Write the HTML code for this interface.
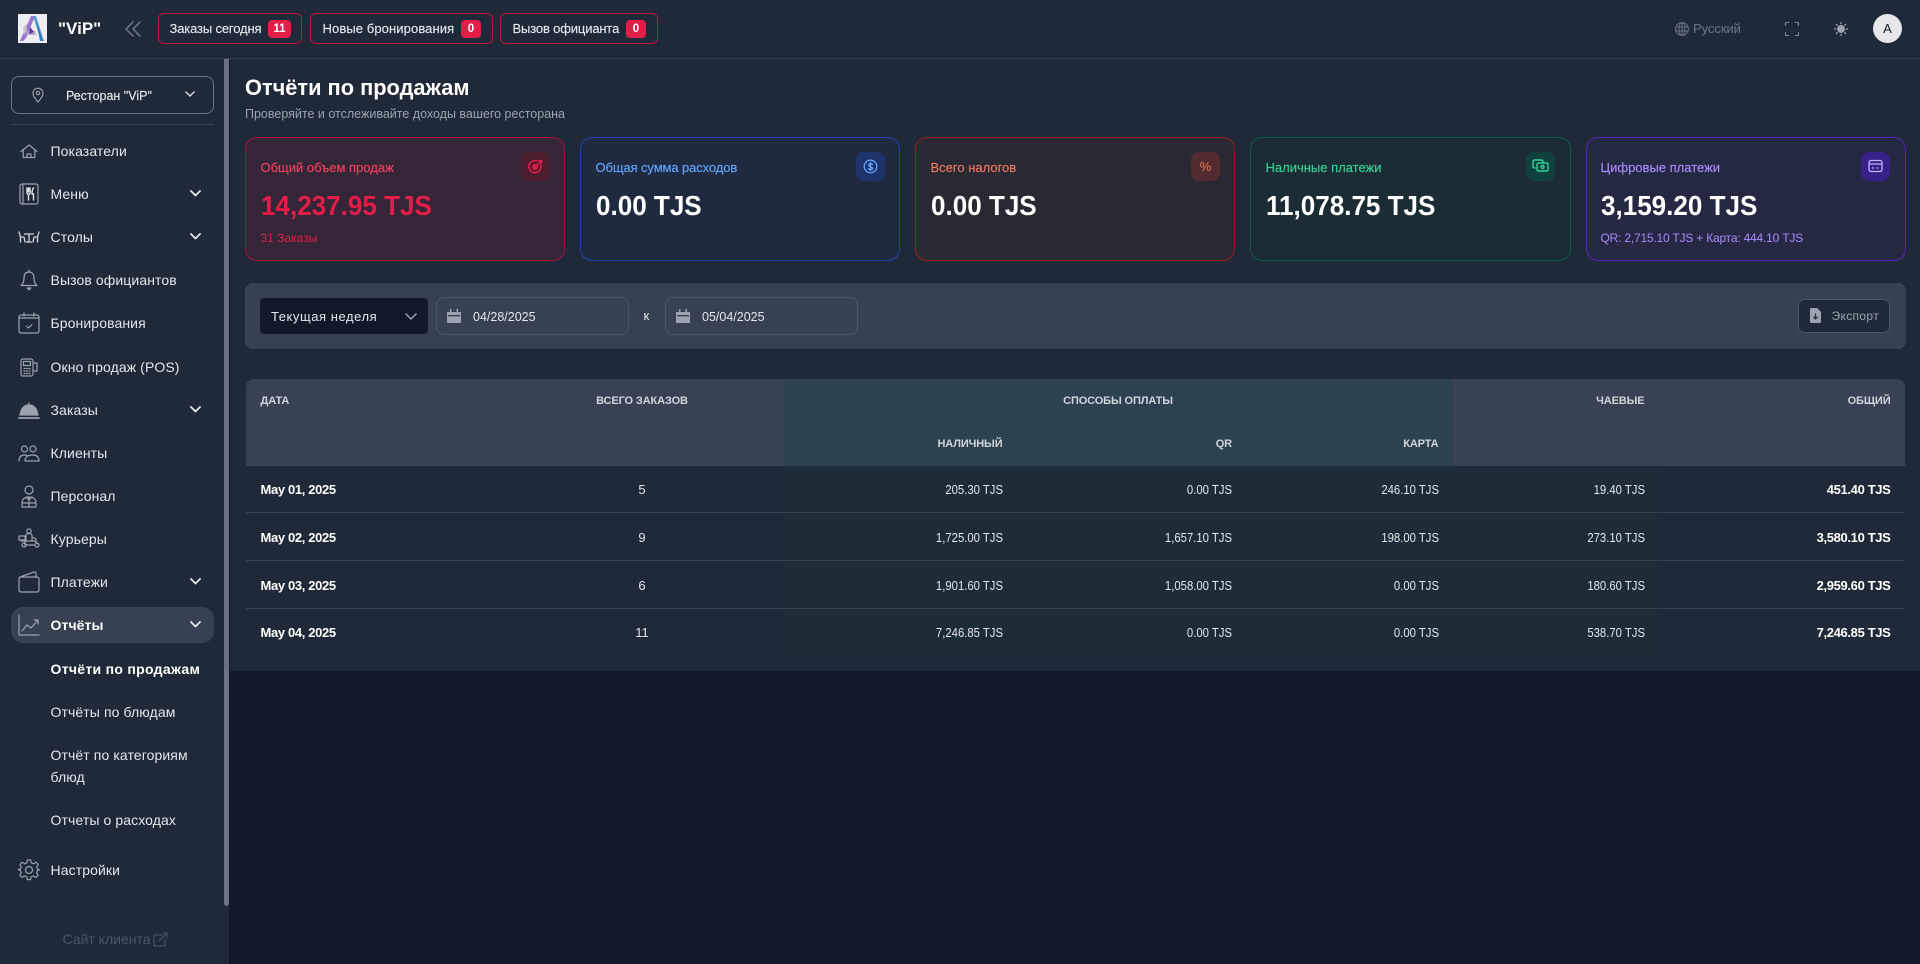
<!DOCTYPE html>
<html lang="ru"><head><meta charset="utf-8"><title>Отчёти по продажам</title>
<style>
*{box-sizing:border-box;margin:0;padding:0}
html,body{width:1920px;height:964px;overflow:hidden;background:#111827;font-family:"Liberation Sans","Noto Sans CJK SC",sans-serif;color:#e5e7eb}
.a{position:absolute}
.t{position:absolute;white-space:nowrap;line-height:20px;height:20px}
.r{text-align:right}
.c{text-align:center}
svg{position:absolute;fill:none;stroke:#9ca3af;stroke-width:1.2;stroke-linecap:round;stroke-linejoin:round}
#hdr{left:0;top:0;width:1920px;height:59px;background:#1f2937;border-bottom:1px solid #374151}
.btn{position:absolute;top:13px;height:31px;border:1px solid #be123c;border-radius:6px}
.bd{position:absolute;top:20px;height:18px;background:#e11d48;border-radius:4px;color:#fff;font-size:11.5px;font-weight:bold;line-height:18px;text-align:center}
.bt{font-size:13px;color:#e5e7eb;top:19px;-webkit-text-stroke:.15px #e5e7eb}
#side{left:0;top:59px;width:230px;height:905px;background:#1f2937;border-right:1px solid #111827}
.n{font-size:14px;left:50.5px;color:#e5e7eb;letter-spacing:.1px}
.card{position:absolute;top:137px;width:320.4px;height:124px;border:1px solid;border-radius:12px}
.ib{position:absolute;top:152px;width:29px;height:29px;border-radius:8px}
.lb{font-size:13px;top:158px;-webkit-text-stroke:.15px currentColor}
.val{font-size:28px;font-weight:bold;top:195.5px;color:#fff;transform:scaleX(.93);transform-origin:left center}
.h{font-size:11px;font-weight:bold;color:#d1d5db;top:391px;letter-spacing:-.12px}
.h2{top:434px}
.d{font-size:13px;color:#e5e7eb}
.d.r:not(.b){transform:scaleX(.87);transform-origin:right center}
.b{font-size:13px;font-weight:bold;color:#fff;letter-spacing:-.35px}
.line{position:absolute;left:246px;width:1659px;height:1px;background:#374151}
</style></head><body>

<header id="hdr" class="a"></header>
<!-- logo -->
<svg style="left:18px;top:14px;stroke:none" width="29" height="29" viewBox="0 0 29 29"><rect width="29" height="29" fill="#eeedf1"/><path d="M13 2h4L8 24l-3 3H2z" fill="#9a72cf"/><path d="M15 2h3l8 25h-3z" fill="#5b9bd0"/><path d="M18 6l7 21h-3z" fill="#2f7ab8"/><path d="M9 17h8l1 4H8z" fill="#b4a4cf"/><path d="M12 13l4 5-5 2z" fill="#5a3690"/><path d="M5 14l3-4 1 6-3 5z" fill="#c9c5cf"/></svg>
<div class="t" style="left:58px;top:19px;font-size:17px;font-weight:bold;color:#fff">"ViP"</div>
<svg style="left:124px;top:21px;stroke:#6b7280;stroke-width:1.6" width="18" height="16" viewBox="0 0 18 16"><path d="M9 1 2 8l7 7M16 1 9 8l7 7"/></svg>

<div class="btn" style="left:158px;width:144px"></div>
<div class="t bt" style="left:169.5px;letter-spacing:-.15px">Заказы сегодня</div>
<div class="bd" style="left:268px;width:23px">11</div>
<div class="btn" style="left:310px;width:183px"></div>
<div class="t bt" style="left:322.5px;letter-spacing:.1px">Новые бронирования</div>
<div class="bd" style="left:461px;width:20px">0</div>
<div class="btn" style="left:500px;width:158px"></div>
<div class="t bt" style="left:512.5px;letter-spacing:-.15px">Вызов официанта</div>
<div class="bd" style="left:626px;width:20px">0</div>

<svg style="left:1675px;top:22px;stroke:#6b7280;stroke-width:1" width="14" height="14" viewBox="0 0 14 14"><circle cx="7" cy="7" r="6.4"/><ellipse cx="7" cy="7" rx="3" ry="6.4"/><path d="M.8 5h12.4M.8 9h12.4M7 .6v12.8"/></svg>
<div class="t" style="left:1693px;top:19px;font-size:13px;color:#6b7280;-webkit-text-stroke:.1px #6b7280;letter-spacing:-.05px">Русский</div>
<svg style="left:1785px;top:22px;stroke:#7d8796;stroke-width:1.1;stroke-linecap:butt" width="14" height="14" viewBox="0 0 14 14"><path d="M.5 4V.5H4M10 .5h3.5V4M13.5 10v3.500H10M4 13.500H.5V10"/></svg>
<svg style="left:1834px;top:22px;stroke:#9ca3af;stroke-width:1.3" width="14" height="14" viewBox="0 0 14 14"><circle cx="7" cy="7" r="3.300" fill="#9ca3af"/><path d="M7 .5v1.200M7 12.300v1.200M.5 7h1.200M12.300 7h1.200M2.400 2.400l.9.9M10.700 10.700l.9.9M2.400 11.600l.9-.9M10.700 3.300l.9-.9"/></svg>
<div class="a" style="left:1873px;top:14px;width:29px;height:29px;border-radius:50%;background:#e5e7eb;color:#111827;font-size:13px;line-height:29px;text-align:center">A</div>

<aside id="side" class="a"></aside>
<div class="a" style="left:224px;top:59px;width:5px;height:847px;background:#6b7280;border-radius:0 0 3px 3px"></div>

<div class="a" style="left:11px;top:76px;width:203px;height:38px;border:1px solid #6b7280;border-radius:8px"></div>
<svg style="left:31px;top:87px;stroke:#9ca3af;stroke-width:1.100" width="14" height="16" viewBox="0 0 14 16"><path d="M7 15C4 11.500 2 9 2 6.200a5 5 0 0 1 10 0C12 9 10 11.500 7 15z"/><circle cx="7" cy="6" r="1.700"/></svg>
<div class="t" style="left:66px;top:85.500px;font-size:12.500px;color:#e5e7eb;-webkit-text-stroke:.15px #e5e7eb">Ресторан "ViP"</div>
<svg style="left:185px;top:91px;stroke:#d1d5db;stroke-width:1.500" width="10" height="7" viewBox="0 0 10 7"><path d="M1 1l4 4 4-4"/></svg>
<div class="a" style="left:11px;top:124px;width:203px;height:1px;background:#374151"></div>

<div class="a" style="left:11px;top:607px;width:203px;height:36px;background:#374151;border-radius:12px"></div>

<div class="t n" style="top:140.500px">Показатели</div>
<div class="t n" style="top:184px">Меню</div>
<div class="t n" style="top:227px">Столы</div>
<div class="t n" style="top:270px">Вызов официантов</div>
<div class="t n" style="top:313px">Бронирования</div>
<div class="t n" style="top:356.500px">Окно продаж (POS)</div>
<div class="t n" style="top:400px">Заказы</div>
<div class="t n" style="top:443px">Клиенты</div>
<div class="t n" style="top:486px">Персонал</div>
<div class="t n" style="top:529px">Курьеры</div>
<div class="t n" style="top:572px">Платежи</div>
<div class="t n" style="top:615px;font-weight:bold;color:#fff">Отчёты</div>
<div class="t n" style="top:659px;font-weight:bold;color:#fff;letter-spacing:.3px">Отчёти по продажам</div>
<div class="t n" style="top:702px">Отчёты по блюдам</div>
<div class="t n" style="top:745px">Отчёт по категориям</div>
<div class="t n" style="top:767px">блюд</div>
<div class="t n" style="top:810px">Отчеты о расходах</div>
<div class="t n" style="top:860px">Настройки</div>
<div class="t" style="left:62.500px;top:929px;font-size:14px;color:#4b5563">Сайт клиента</div>
<svg style="left:153px;top:932px;stroke:#4b5563;stroke-width:1.100" width="15" height="15" viewBox="0 0 15 15"><path d="M9 3H1v11h11V7M6 9l8-8M9.500 1H14v4.500"/></svg>

<!-- chevrons -->
<svg style="left:190px;top:190px;stroke:#e5e7eb;stroke-width:1.800" width="11" height="7" viewBox="0 0 11 7"><path d="M1 1l4.500 4.500L10 1"/></svg>
<svg style="left:190px;top:233px;stroke:#e5e7eb;stroke-width:1.800" width="11" height="7" viewBox="0 0 11 7"><path d="M1 1l4.500 4.500L10 1"/></svg>
<svg style="left:190px;top:406px;stroke:#e5e7eb;stroke-width:1.800" width="11" height="7" viewBox="0 0 11 7"><path d="M1 1l4.500 4.500L10 1"/></svg>
<svg style="left:190px;top:578px;stroke:#e5e7eb;stroke-width:1.800" width="11" height="7" viewBox="0 0 11 7"><path d="M1 1l4.500 4.500L10 1"/></svg>
<svg style="left:190px;top:621px;stroke:#e5e7eb;stroke-width:1.800" width="11" height="7" viewBox="0 0 11 7"><path d="M1 1l4.500 4.500L10 1"/></svg>

<!-- nav icons -->
<svg style="left:20px;top:144px" width="18" height="15" viewBox="0 0 18 15"><path d="M1 7.500 9 1l8 6.500M3.200 6v7.500h11.600V6M7 13.500v-3.500h4v3.500"/></svg>
<svg style="left:19px;top:183px" width="20" height="22" viewBox="0 0 20 22"><rect x="1" y="1" width="18" height="20" rx="2"/><path d="M4 1v20"/><path d="M8 5v5c0 1 1 1.500 1.500 1.500V17M9.500 5v4M11 5v5c0 1-1 1.500-1.500 1.500M14.500 5c-1.500 1-1.500 4-1.500 6h1.500v6" stroke="#e5e7eb" stroke-width="1.400"/></svg>
<svg style="left:18px;top:231px;stroke:#d1d5db;stroke-width:1.300" width="22" height="12" viewBox="0 0 22 12"><path d="M1 1l1.500 5V11M2.500 6H6l1 5M21 1l-1.500 5V11M19.500 6H16l-1 5M6.500 3h9M11 3v8M8.500 11h5"/></svg>
<svg style="left:20px;top:269px" width="18" height="22" viewBox="0 0 18 22"><path d="M9 1v2M9 3c-3.500 0-5 2.500-5 6 0 4-1 6-3 7.500h16c-2-1.500-3-3.500-3-7.500 0-3.500-1.500-6-5-6zM7 19h4l-2 2z"/></svg>
<svg style="left:18px;top:312px" width="22" height="22" viewBox="0 0 22 22"><rect x="1" y="3" width="20" height="18" rx="2"/><path d="M1 6h20M6 1v3M16 1v3M8.500 14l2 2 3.500-3.500"/></svg>
<svg style="left:20px;top:358px" width="18" height="19" viewBox="0 0 18 19"><rect x="1" y="1" width="12" height="17" rx="2"/><rect x="3.500" y="3.500" width="7" height="4"/><path d="M13 5h4v8h-4M4 10.500h1M6.500 10.500h1M9 10.500h1M4 13h1M6.500 13h1M9 13h1M4 15.500h1M6.500 15.500h1M9 15.500h1"/></svg>
<svg style="left:18px;top:402px" width="22" height="17" viewBox="0 0 22 17"><path d="M11 1v2M2 13C3 7 6 3 11 3s8 4 9 10z" fill="#9ca3af"/><path d="M1 16h20" stroke-width="1.800"/></svg>
<svg style="left:18px;top:445px" width="22" height="17" viewBox="0 0 22 17"><circle cx="6.500" cy="4" r="3"/><circle cx="15" cy="4" r="3"/><path d="M1 16c0-4 2-6 5.500-6 1 0 2 .2 2.500.6M7 16c0-4 3-6 7.500-6S21 12 21 16z"/></svg>
<svg style="left:21px;top:485px" width="16" height="23" viewBox="0 0 16 23"><circle cx="8" cy="5" r="4"/><path d="M1 22v-4c0-4 3-6 7-6s7 2 7 6v4zM8 12v10M1 18h14M5 12l3 3 3-3"/></svg>
<svg style="left:18px;top:528px" width="22" height="20" viewBox="0 0 22 20"><circle cx="11" cy="3" r="2.200"/><path d="M8 8c0-2 1-2.500 3-2.500s3 .5 3 2.500v5H8zM1 8h6v4H1zM3 13h14l3 3M7 14v3h9M14 9l4 2v3"/><circle cx="6" cy="17" r="2"/><circle cx="19" cy="17" r="2"/></svg>
<svg style="left:18px;top:571px" width="22" height="22" viewBox="0 0 22 22"><rect x="1" y="6" width="20" height="15" rx="2"/><path d="M2 6 16 1c1.500-.3 2 .5 2 2v3"/></svg>
<svg style="left:18px;top:614px" width="22" height="22" viewBox="0 0 22 22"><path d="M1 1v20h20"/><path d="M4 17l5-6 4 3 7-8M16 6h4v4"/></svg>
<svg style="left:18px;top:859px" width="22" height="22" viewBox="0 0 22 22"><circle cx="11" cy="11" r="3.500"/><path d="M9.300 1h3.400l.6 3 2.400 1 2.600-1.700 2.400 2.400L18.900 8.300l1 2.400 2 .6v-.3.300l-.1 0v0l-2 .6-1 2.400 1.700 2.600-2.400 2.400-2.600-1.700-2.400 1-.6 3H9.300l-.6-3-2.400-1-2.600 1.700-2.400-2.400 1.700-2.600-1-2.400-2-.6v-.4l2-.6 1-2.400L1.400 5.700l2.400-2.400 2.500 1.700 2.400-1z" transform="translate(.5 0) scale(.96)"/></svg>

<main class="a" style="left:230px;top:59px;width:1690px;height:612px;background:#1f2937"></main>

<div class="t" style="left:245px;top:78px;font-size:21.800px;font-weight:bold;color:#fff">Отчёти по продажам</div>
<div class="t" style="left:245px;top:104px;font-size:12.500px;color:#9ca3af">Проверяйте и отслеживайте доходы вашего ресторана</div>

<!-- cards -->
<div class="card" style="left:245px;background:#352637;border-color:#9f1239"></div>
<div class="card" style="left:580px;background:#1f2a40;border-color:#1e40af"></div>
<div class="card" style="left:915px;background:#2a2833;border-color:#991b1b"></div>
<div class="card" style="left:1250.400px;background:#1c2c35;border-color:#065f46"></div>
<div class="card" style="left:1585.600px;background:#252843;border-color:#5b21b6"></div>

<div class="ib" style="left:521px;background:#4c1d2f"></div>
<svg style="left:527px;top:158px;stroke:#e11d48;stroke-width:1.500" width="17" height="17" viewBox="0 0 17 17"><path d="M13.500 6.500A6 6 0 1 1 10 3M8 9l6-6M12 2.500h2.500V5"/><circle cx="8" cy="9" r="2.200" fill="#e11d48"/></svg>
<div class="ib" style="left:856px;background:#1e3a8a;opacity:.6"></div>
<svg style="left:863px;top:159px;stroke:#60a5fa;stroke-width:1.300" width="15" height="15" viewBox="0 0 15 15"><circle cx="7.500" cy="7.500" r="6.300"/><path d="M9.500 5.500c-.5-1-3.800-1.300-3.800.7 0 2 3.800 1 3.800 3 0 1.800-3.500 1.600-4 .4M7.500 3.500v8"/></svg>
<div class="ib" style="left:1191px;background:#542a31"></div>
<div class="t c" style="left:1191px;width:29px;top:157px;font-size:13px;color:#ec7a5c">%</div>
<div class="ib" style="left:1526px;background:#11413c"></div>
<svg style="left:1532px;top:158px;stroke:#34d399;stroke-width:1.400" width="17" height="15" viewBox="0 0 17 15"><path d="M3 10H2.500A1.500 1.500 0 0 1 1 8.500v-5A1.500 1.500 0 0 1 2.500 2h7A1.500 1.500 0 0 1 11 3.500V5"/><rect x="5" y="5" width="11" height="8" rx="1.500"/><circle cx="10.500" cy="9" r="1.500"/></svg>
<div class="ib" style="left:1861px;background:#372087"></div>
<svg style="left:1868px;top:159px;stroke:#c4b5fd;stroke-width:1.300" width="15" height="14" viewBox="0 0 15 14"><rect x="1" y="1.500" width="13" height="11" rx="2"/><path d="M1 5h13M4.500 9h1M9 9h1"/></svg>

<div class="t lb" style="left:260.500px;color:#f43f5e">Общий объем продаж</div>
<div class="t lb" style="left:595.500px;color:#60a5fa;letter-spacing:-.1px">Общая сумма расходов</div>
<div class="t lb" style="left:930.500px;color:#ec7a5c">Всего налогов</div>
<div class="t lb" style="left:1265.500px;color:#34d399">Наличные платежи</div>
<div class="t lb" style="left:1600.500px;color:#a78bfa">Цифровые платежи</div>

<div class="t val" style="left:260.500px;color:#e11d48">14,237.95 TJS</div>
<div class="t val" style="left:595.500px">0.00 TJS</div>
<div class="t val" style="left:930.500px">0.00 TJS</div>
<div class="t val" style="left:1265.500px">11,078.75 TJS</div>
<div class="t val" style="left:1600.500px">3,159.20 TJS</div>

<div class="t" style="left:260.500px;top:227.500px;font-size:12px;color:#e11d48">31 Заказы</div>
<div class="t" style="left:1600.500px;top:227.500px;font-size:12px;color:#a78bfa;letter-spacing:-.2px">QR: 2,715.10 TJS + Карта: 444.10 TJS</div>

<!-- filter -->
<div class="a" style="left:245px;top:283px;width:1661px;height:66px;background:#374151;border-radius:8px"></div>
<div class="a" style="left:260px;top:298px;width:168px;height:36px;background:#111827;border-radius:4px"></div>
<div class="t" style="left:271px;top:306.500px;font-size:13px;color:#e5e7eb;letter-spacing:.55px">Текущая неделя</div>
<svg style="left:405px;top:313px;stroke:#9ca3af;stroke-width:1.500" width="12" height="8" viewBox="0 0 12 8"><path d="M1 1l5 5 5-5"/></svg>
<div class="a" style="left:436px;top:297px;width:193px;height:38px;border:1px solid #4b5563;border-radius:8px"></div>
<svg style="left:447px;top:309px;stroke:none;fill:#9ca3af" width="14" height="14" viewBox="0 0 14 14"><path d="M0 3h14v11H0zM3 0h1.500v3H3zM9.500 0H11v3H9.500z"/><rect x="1" y="6" width="12" height="1.400" fill="#374151"/></svg>
<div class="t" style="left:473px;top:306.500px;font-size:12.500px;color:#e5e7eb">04/28/2025</div>
<div class="t" style="left:643.500px;top:306px;font-size:13px;color:#e5e7eb">к</div>
<div class="a" style="left:665px;top:297px;width:193px;height:38px;border:1px solid #4b5563;border-radius:8px"></div>
<svg style="left:676px;top:309px;stroke:none;fill:#9ca3af" width="14" height="14" viewBox="0 0 14 14"><path d="M0 3h14v11H0zM3 0h1.500v3H3zM9.500 0H11v3H9.500z"/><rect x="1" y="6" width="12" height="1.400" fill="#374151"/></svg>
<div class="t" style="left:702px;top:306.500px;font-size:12.500px;color:#e5e7eb">05/04/2025</div>
<div class="a" style="left:1798px;top:299px;width:92px;height:34px;background:#1f2937;border:1px solid #4b5563;border-radius:6px"></div>
<svg style="left:1810px;top:308px;stroke:none;fill:#9ca3af" width="11" height="15" viewBox="0 0 11 15"><path d="M0 1.500A1.500 1.500 0 0 1 1.500 0H7l4 4v9.500A1.500 1.500 0 0 1 9.500 15h-8A1.500 1.500 0 0 1 0 13.500z"/><path d="M5.500 6v5M3.500 9l2 2 2-2" stroke="#1f2937" stroke-width="1.200" fill="none"/></svg>
<div class="t" style="left:1831.500px;top:306px;font-size:12px;color:#9ca3af;letter-spacing:.35px">Экспорт</div>

<!-- table -->
<div class="a" style="left:246px;top:379px;width:1659px;height:87px;background:#394252;border-radius:8px 8px 0 0"></div>
<div class="a" style="left:784px;top:379px;width:669px;height:87px;background:#2c424e"></div>
<div class="a" style="left:784px;top:466px;width:876px;height:189px;background:#1d2c37"></div>
<div class="line" style="top:512px"></div>
<div class="line" style="top:560px"></div>
<div class="line" style="top:608px"></div>

<div class="t h" style="left:260.500px">ДАТА</div>
<div class="t h c" style="left:542px;width:200px">ВСЕГО ЗАКАЗОВ</div>
<div class="t h c" style="left:1018px;width:200px">СПОСОБЫ ОПЛАТЫ</div>
<div class="t h r" style="left:1444.500px;width:200px">ЧАЕВЫЕ</div>
<div class="t h r" style="left:1690.500px;width:200px">ОБЩИЙ</div>
<div class="t h h2 r" style="left:802.500px;width:200px">НАЛИЧНЫЙ</div>
<div class="t h h2 r" style="left:1032px;width:200px">QR</div>
<div class="t h h2 r" style="left:1238.500px;width:200px">КАРТА</div>

<div class="t d b" style="left:260.500px;top:479.500px">May 01, 2025</div>
<div class="t d c" style="left:542px;width:200px;top:479.500px">5</div>
<div class="t d r" style="left:802.500px;width:200px;top:479.500px">205.30 TJS</div>
<div class="t d r" style="left:1032px;width:200px;top:479.500px">0.00 TJS</div>
<div class="t d r" style="left:1238.500px;width:200px;top:479.500px">246.10 TJS</div>
<div class="t d r" style="left:1444.500px;width:200px;top:479.500px">19.40 TJS</div>
<div class="t d b r" style="left:1690.500px;width:200px;top:479.500px">451.40 TJS</div>

<div class="t d b" style="left:260.500px;top:527.500px">May 02, 2025</div>
<div class="t d c" style="left:542px;width:200px;top:527.500px">9</div>
<div class="t d r" style="left:802.500px;width:200px;top:527.500px">1,725.00 TJS</div>
<div class="t d r" style="left:1032px;width:200px;top:527.500px">1,657.10 TJS</div>
<div class="t d r" style="left:1238.500px;width:200px;top:527.500px">198.00 TJS</div>
<div class="t d r" style="left:1444.500px;width:200px;top:527.500px">273.10 TJS</div>
<div class="t d b r" style="left:1690.500px;width:200px;top:527.500px">3,580.10 TJS</div>

<div class="t d b" style="left:260.500px;top:575.500px">May 03, 2025</div>
<div class="t d c" style="left:542px;width:200px;top:575.500px">6</div>
<div class="t d r" style="left:802.500px;width:200px;top:575.500px">1,901.60 TJS</div>
<div class="t d r" style="left:1032px;width:200px;top:575.500px">1,058.00 TJS</div>
<div class="t d r" style="left:1238.500px;width:200px;top:575.500px">0.00 TJS</div>
<div class="t d r" style="left:1444.500px;width:200px;top:575.500px">180.60 TJS</div>
<div class="t d b r" style="left:1690.500px;width:200px;top:575.500px">2,959.60 TJS</div>

<div class="t d b" style="left:260.500px;top:622.500px">May 04, 2025</div>
<div class="t d c" style="left:542px;width:200px;top:622.500px">11</div>
<div class="t d r" style="left:802.500px;width:200px;top:622.500px">7,246.85 TJS</div>
<div class="t d r" style="left:1032px;width:200px;top:622.500px">0.00 TJS</div>
<div class="t d r" style="left:1238.500px;width:200px;top:622.500px">0.00 TJS</div>
<div class="t d r" style="left:1444.500px;width:200px;top:622.500px">538.70 TJS</div>
<div class="t d b r" style="left:1690.500px;width:200px;top:622.500px">7,246.85 TJS</div>
</body></html>
